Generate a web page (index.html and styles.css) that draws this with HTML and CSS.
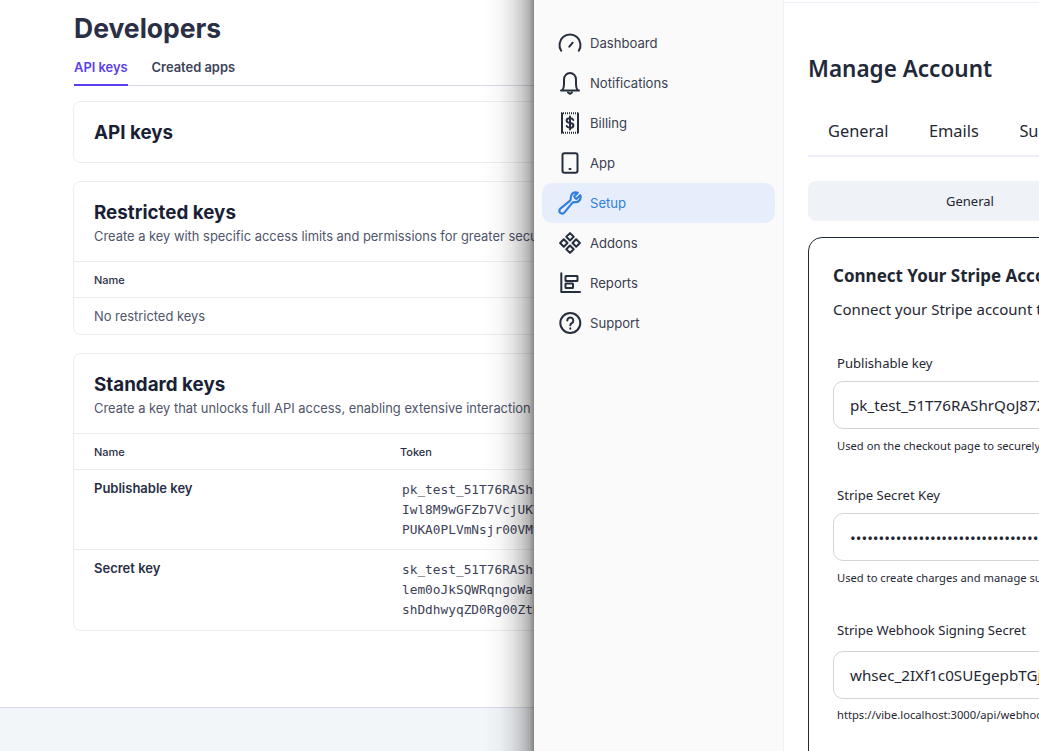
FILE: index.html
```html
<!DOCTYPE html>
<html lang="en">
<head>
<meta charset="utf-8">
<title>Developers</title>
<link rel="stylesheet" href="styles.css">
</head>
<body>
<div class="page">
  <section class="dev">
    <div class="dev-body">
      <h1 class="dev-title">Developers</h1>
      <nav class="dev-tabs">
        <span class="dev-tab dev-tab-active">API keys</span>
        <span class="dev-tab">Created apps</span>
      </nav>
      <div class="card card-intro"><h2 class="card-title">API keys</h2></div>
      <div class="card">
        <div class="card-head">
          <h2 class="card-title">Restricted keys</h2>
          <p class="card-sub">Create a key with specific access limits and permissions for greater security.</p>
        </div>
        <div class="row row-th"><span>Name</span></div>
        <div class="row row-empty"><span>No restricted keys</span></div>
      </div>
      <div class="card">
        <div class="card-head">
          <h2 class="card-title">Standard keys</h2>
          <p class="card-sub">Create a key that unlocks full API access, enabling extensive interaction with your account.</p>
        </div>
        <div class="row row-th"><span>Name</span><span>Token</span></div>
        <div class="row row-key">
          <span class="key-name">Publishable key</span>
          <code class="token">pk_test_51T76RAShrQoJ87Z<br>Iwl8M9wGFZb7VcjUKT<br>PUKA0PLVmNsjr00VMt</code>
        </div>
        <div class="row row-key row-last">
          <span class="key-name">Secret key</span>
          <code class="token">sk_test_51T76RAShrQoJ87Z<br>lem0oJkSQWRqngoWa1<br>shDdhwyqZD0Rg00ZtK</code>
        </div>
      </div>
    </div>
    <footer class="dev-foot"></footer>
  </section>

  <section class="panel">
    <aside class="side">
      <a class="side-item">
        <svg class="ico" viewBox="0 0 24 24"><path d="M3.200 19.700A10.500 10.500 0 1 1 20.800 19.700M11.300 15.700l3.400-4"/></svg>
        <span>Dashboard</span>
      </a>
      <a class="side-item">
        <svg class="ico" viewBox="0 0 24 24"><path d="M3 19.400h18M4 19.400c1.600-1.500 2-3 2-6V8.500a6 6.500 0 0 1 12 0v4.900c0 3 .4 4.500 2 6M10 21.500l2 1.300 2-1.300"/></svg>
        <span>Notifications</span>
      </a>
      <a class="side-item">
        <svg class="ico" viewBox="0 0 24 24"><path d="M4 2.500v19M20 2.500v19"/><path class="dash" d="M3 2.300h18M3 21.700h18"/><path d="M15.300 9c-.4-1.100-1.600-1.800-3.300-1.800-2.100 0-3.400 1-3.400 2.400s1.300 2.200 3.400 2.400 3.400 1 3.400 2.400-1.300 2.400-3.400 2.400c-1.700 0-2.900-.7-3.300-1.800M12 5.500v13"/></svg>
        <span>Billing</span>
      </a>
      <a class="side-item">
        <svg class="ico" viewBox="0 0 24 24"><rect x="4.500" y="2.300" width="15" height="19.400" rx="2"/><path d="M11.500 18h1"/></svg>
        <span>App</span>
      </a>
      <a class="side-item side-item-active">
        <svg class="ico" viewBox="1 1 22 22"><path d="M21.750 6.750a4.500 4.500 0 0 1-4.884 4.484c-1.076-.091-2.264.071-2.950.904l-7.152 8.684a2.548 2.548 0 1 1-3.586-3.586l8.684-7.152c.833-.686.995-1.874.904-2.950a4.500 4.500 0 0 1 6.336-4.486l-3.276 3.276a3.004 3.004 0 0 0 2.250 2.250l3.276-3.276c.256.565.398 1.192.398 1.852z"/></svg>
        <span>Setup</span>
      </a>
      <a class="side-item">
        <svg class="ico" viewBox="0 0 24 24"><path d="M12 2.100l3.700 3.700-3.700 3.700-3.700-3.700zM18.200 8.300l3.700 3.700-3.700 3.700-3.700-3.700zM12 14.500l3.700 3.700-3.700 3.700-3.700-3.700zM5.800 8.300l3.700 3.700-3.700 3.700-3.700-3.700z"/></svg>
        <span>Addons</span>
      </a>
      <a class="side-item">
        <svg class="ico" viewBox="0 0 24 24"><path d="M3.300 2.300V21h18.700"/><rect x="7.500" y="5" width="12" height="5" rx=".5"/><rect x="7.500" y="12.500" width="7.500" height="4.500" rx=".5"/></svg>
        <span>Reports</span>
      </a>
      <a class="side-item">
        <svg class="ico" viewBox="0 0 24 24"><circle cx="12.300" cy="12" r="10"/><path d="M9.300 9.500a3 3 0 1 1 4.500 2.600c-1 .6-1.500 1.200-1.500 2.200M12.300 17.300v.4"/></svg>
        <span>Support</span>
      </a>
    </aside>
    <main class="main">
      <h1 class="main-title">Manage Account</h1>
      <nav class="main-tabs">
        <span>General</span><span>Emails</span><span>Subscriptions</span>
      </nav>
      <div class="subnav"><span class="subnav-item">General</span></div>
      <div class="stripe">
        <h2 class="stripe-title">Connect Your Stripe Account</h2>
        <p class="stripe-sub">Connect your Stripe account to accept payments from your customers.</p>
        <div class="field field-one">
          <label class="field-label">Publishable key</label>
          <div class="field-input">pk_test_51T76RAShrQoJ87Z</div>
          <p class="field-hint">Used on the checkout page to securely collect payment details.</p>
        </div>
        <div class="field field-two">
          <label class="field-label">Stripe Secret Key</label>
          <div class="field-input field-secret">••••••••••••••••••••••••••••••••••••••••</div>
          <p class="field-hint">Used to create charges and manage subscriptions.</p>
        </div>
        <div class="field field-three">
          <label class="field-label">Stripe Webhook Signing Secret</label>
          <div class="field-input">whsec_2IXf1c0SUEgepbTGj</div>
          <p class="field-hint">https://vibe.localhost:3000/api/webhooks/stripe</p>
        </div>
      </div>
    </main>
  </section>
</div>
</body>
</html>
```

FILE: styles.css
```css
* { box-sizing: border-box; }
html, body { margin: 0; height: 100%; overflow: hidden; background: #fff; }
h1, h2, p { margin: 0; }

.page { display: flex; height: 751px; width: 1039px; overflow: hidden; }

/* left page */
.dev { flex: 0 0 534px; height: 751px; display: flex; flex-direction: column; overflow: hidden; font-family: Inter, sans-serif; background: #fff; }
.dev-body { flex: 1; padding: 11px 0 0 73px; width: 900px; }
.dev-title { font-size: 26.500px; line-height: 34px; font-weight: 700; color: #2a2f45; margin-left: 1px; }
.dev-tabs { display: flex; gap: 24px; margin: 11px 0 0 1px; border-bottom: 1px solid #d5dbe5; height: 30px; }
.dev-tab { font-size: 12.900px; line-height: 22px; font-weight: 600; color: #3c4257; height: 30px; padding-top: 1px; }
.dev-tab-active { color: #5a3ff0; border-bottom: 2px solid #5a3ff0; }

.card { margin-top: 18px; border: 1px solid #ebeef1; border-radius: 8px; background: #fff; }
.card-intro { margin-top: 15px; height: 62px; padding: 18px 20px; }
.card-title { font-size: 18.800px; line-height: 26px; font-weight: 700; color: #1a1f36; }
.card-head { padding: 18px 20px 0; height: 79px; }
.card-sub { font-size: 12.900px; line-height: 20px; color: #4f566b; margin-top: 1px; white-space: nowrap; }

.row { display: grid; grid-template-columns: 306px 1fr; padding: 0 20px; border-top: 1px solid #ebeef1; }
.row-th { height: 36px; align-items: center; font-size: 11px; font-weight: 500; color: #2a2f45; }
.row-empty { height: 37px; align-items: center; font-size: 12.900px; color: #4f566b; }
.row-key { height: 80px; padding-top: 8px; }
.row-last { height: 81px; }
.key-name { font-size: 13px; line-height: 20px; font-weight: 600; color: #2a2f45; }
.token { font-family: "DejaVu Sans Mono", monospace; font-size: 12.800px; line-height: 20px; color: #3c4257; padding: 2px 0 0 2px; white-space: nowrap; }
.dev-foot { flex: 0 0 44px; background: #f3f6f9; border-top: 1px solid #d5dbe5; }

/* right panel */
.panel { flex: 0 0 950px; height: 751px; display: flex; background: #fff; position: relative; }
.panel::before { content: ""; position: absolute; top: 0; bottom: 0; left: -50px; width: 50px; background: linear-gradient(to right, rgba(0,0,0,0) 0%, rgba(0,0,0,.03) 32%, rgba(0,0,0,.1) 56%, rgba(0,0,0,.2) 76%, rgba(0,0,0,.3) 90%, rgba(0,0,0,.47) 100%); }
.side { flex: 0 0 250px; background: #fafafa; border-right: 1px solid #edf0f8; padding: 23px 8px 0; font-family: Inter, sans-serif; }
.side-item { display: flex; align-items: center; gap: 8px; height: 40px; padding-left: 16px; border-radius: 10px; font-size: 13.100px; color: #3a4150; width: 233px; }
.side-item-active { background: #e7eefb; color: #2f7fe0; }
.ico { width: 24px; height: 24px; flex: none; fill: none; stroke: #262e3e; stroke-width: 2; stroke-linecap: round; stroke-linejoin: round; }
.side-item-active .ico { stroke: #2f7fe0; }
.dash { stroke-dasharray: 1 1; stroke-linecap: butt; }

.main { flex: 0 0 700px; padding: 2px 0 0 24px; background: linear-gradient(#edf0f8, #edf0f8) 0 2px / 100% 1px no-repeat; font-family: "Noto Sans", sans-serif; color: #1f2733; }
.main-title { font-size: 22.500px; line-height: 32px; font-weight: 600; margin-top: 51px; color: #1f2937; }
.main-tabs { display: flex; gap: 40.500px; margin-top: 31px; padding: 0 20px; height: 41px; border-bottom: 2px solid #edf0f8; font-size: 16.400px; line-height: 30px; white-space: nowrap; }
.subnav { margin-top: 24px; height: 40px; border-radius: 8px; background: #eff2f7; display: flex; align-items: center; padding-left: 138px; font-size: 13px; }
.stripe { margin-top: 16px; border: 1px solid #1f2937; border-radius: 14px; padding: 24px; min-height: 600px; }
.stripe-title { font-size: 17px; line-height: 28px; font-weight: 700; white-space: nowrap; }
.stripe-sub { font-size: 15px; line-height: 24px; margin-top: 7px; white-space: nowrap; }
.field-one { margin-top: 32px; }
.field-two { margin-top: 30px; }
.field-three { margin-top: 33px; }
.field-label { display: block; padding-left: 4px; font-size: 13.100px; line-height: 20px; }
.field-input { margin-top: 8px; height: 48px; border: 1px solid #d4d4d8; border-radius: 10px; padding: 0 16px; font-size: 15.200px; line-height: 46px; white-space: nowrap; overflow: hidden; }
.field-secret { line-height: 48px; }
.field-three .field-input { margin-top: 11px; }
.field-hint { padding-left: 4px; margin-top: 8px; font-size: 11.200px; line-height: 18px; white-space: nowrap; }
.field-three .field-hint { margin-top: 7px; }
```
